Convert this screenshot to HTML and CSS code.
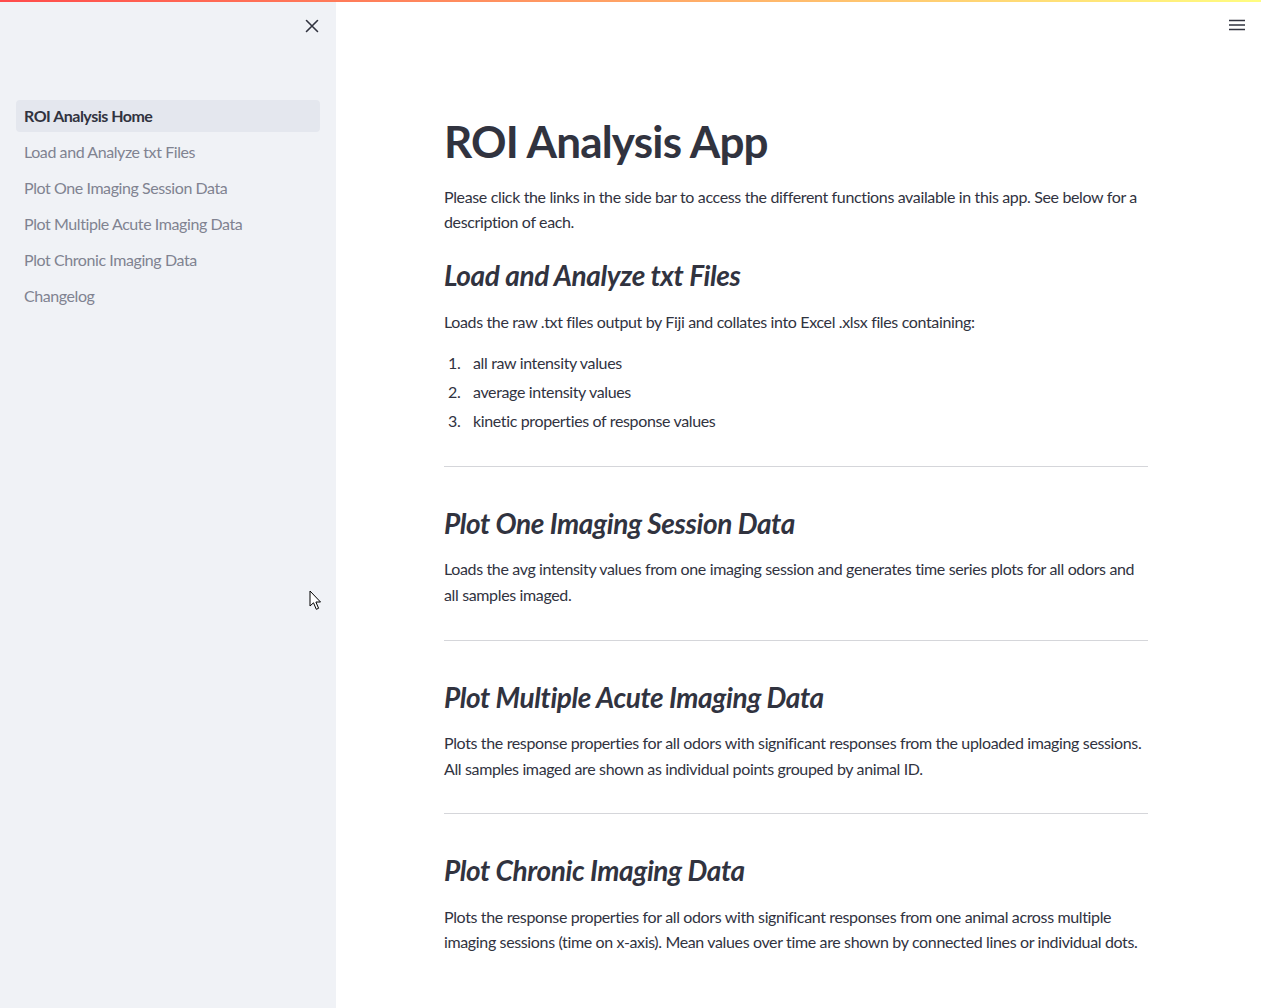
FILE: index.html
```html
<!DOCTYPE html>
<html lang="en">
<head>
<meta charset="utf-8">
<title>ROI Analysis App</title>
<link rel="stylesheet" href="styles.css">
</head>
<body>
<div class="decoration"></div>
<div class="app">
  <aside class="sidebar">
    <div class="sidebar-head">
      <button class="close-btn" aria-label="Close sidebar">
        <svg width="14" height="14" viewBox="0 0 14 14"><path d="M1.5 1.5 L12.5 12.5 M12.5 1.5 L1.5 12.5" stroke="#31333f" stroke-width="1.6" stroke-linecap="round"/></svg>
      </button>
    </div>
    <nav class="nav">
      <a class="nav-item active">ROI Analysis Home</a>
      <a class="nav-item">Load and Analyze txt Files</a>
      <a class="nav-item">Plot One Imaging Session Data</a>
      <a class="nav-item">Plot Multiple Acute Imaging Data</a>
      <a class="nav-item">Plot Chronic Imaging Data</a>
      <a class="nav-item">Changelog</a>
    </nav>
  </aside>
  <main class="main">
    <header class="topbar">
      <button class="menu-btn" aria-label="Menu">
        <svg width="16" height="12" viewBox="0 0 16 12"><path d="M0 1.5 H16 M0 6 H16 M0 10.5 H16" stroke="#31333f" stroke-width="1.6"/></svg>
      </button>
    </header>
    <div class="content">
      <h1 class="title">ROI Analysis App</h1>
      <p class="text">Please click the links in the side bar to access the different functions available in this app. See below for a description of each.</p>
      <h3 class="section">Load and Analyze txt Files</h3>
      <p class="text">Loads the raw .txt files output by Fiji and collates into Excel .xlsx files containing:</p>
      <ol class="list">
        <li>all raw intensity values</li>
        <li>average intensity values</li>
        <li>kinetic properties of response values</li>
      </ol>
      <hr class="rule">
      <h3 class="section">Plot One Imaging Session Data</h3>
      <p class="text">Loads the avg intensity values from one imaging session and generates time series plots for all odors and all samples imaged.</p>
      <hr class="rule">
      <h3 class="section">Plot Multiple Acute Imaging Data</h3>
      <p class="text">Plots the response properties for all odors with significant responses from the uploaded imaging sessions. All samples imaged are shown as individual points grouped by animal ID.</p>
      <hr class="rule">
      <h3 class="section">Plot Chronic Imaging Data</h3>
      <p class="text">Plots the response properties for all odors with significant responses from one animal across multiple imaging sessions (time on x-axis). Mean values over time are shown by connected lines or individual dots.</p>
    </div>
  </main>
</div>
<svg class="cursor" width="14" height="22" viewBox="0 0 14 22"><path d="M1 1 L1 16 L4.5 12.8 L7.3 19.3 L9.6 18.3 L6.9 12 L11.5 12 Z" fill="#fff" stroke="#000" stroke-width="1" stroke-linejoin="round"/></svg>
</body>
</html>
```
FILE: styles.css
```css
* { box-sizing: border-box; }
html, body { margin: 0; padding: 0; height: 100%; }
body {
  font-family: Lato, "Noto Sans", "Liberation Sans", sans-serif;
  color: #31333f;
  background: #ffffff;
  overflow: hidden;
  position: relative;
  letter-spacing: -0.36px;
}
.decoration {
  position: absolute;
  top: 0; left: 0; right: 0;
  height: 2px;
  background: linear-gradient(90deg, #ff4b4b, #fffd80);
  z-index: 5;
}
.app {
  display: flex;
  height: 100%;
}
.sidebar {
  width: 336px;
  flex: 0 0 336px;
  background: #f0f2f6;
  display: flex;
  flex-direction: column;
}
.sidebar-head {
  height: 100px;
  display: flex;
  justify-content: flex-end;
  align-items: flex-start;
  padding: 16px 13px 0 0;
}
.close-btn, .menu-btn {
  background: none;
  border: 0;
  padding: 0;
  width: 22px;
  height: 20px;
  display: flex;
  align-items: center;
  justify-content: center;
  cursor: pointer;
}
.nav {
  display: flex;
  flex-direction: column;
  gap: 4px;
  padding: 0 16px;
}
.nav-item {
  height: 32px;
  display: flex;
  align-items: center;
  padding: 0 0 1px 8px;
  font-size: 16px;
  color: #808391;
  border-radius: 4px;
  letter-spacing: -0.42px;
}
.nav-item.active {
  background: #e4e7ee;
  color: #31333f;
  font-weight: 700;
  letter-spacing: -0.5px;
}
.main {
  flex: 1;
  display: flex;
  flex-direction: column;
}
.topbar {
  height: 50px;
  display: flex;
  justify-content: flex-end;
  align-items: flex-start;
  padding: 15px 13px 0 0;
}
.content {
  width: 704px;
  margin-left: 108px;
  padding-top: 65px;
}
.title {
  font-size: 44px;
  font-weight: 700;
  line-height: 1.2;
  letter-spacing: -0.8px;
  margin: 0 0 16px;
}
.text {
  font-size: 16px;
  line-height: 25.6px;
  margin: 0;
}
.section {
  font-size: 28px;
  font-weight: 700;
  font-style: italic;
  line-height: 1.2;
  letter-spacing: -0.4px;
  margin: 24px 0 16px;
}
.list {
  list-style: none;
  counter-reset: item;
  margin: 16px 0 0;
  padding: 0;
  font-size: 16px;
  line-height: 25.6px;
}
.list li {
  counter-increment: item;
  display: flex;
  margin-bottom: 3.4px;
}
.list li::before {
  content: counter(item) ".";
  width: 29px;
  flex: 0 0 29px;
  padding-left: 4px;
  margin-right: -4px;
}
.rule {
  border: 0;
  border-top: 1px solid #d5d6da;
  margin: 32px 0 40px;
}
.rule + .section { margin-top: 0; }
.cursor {
  position: absolute;
  left: 309px;
  top: 590px;
}
```
